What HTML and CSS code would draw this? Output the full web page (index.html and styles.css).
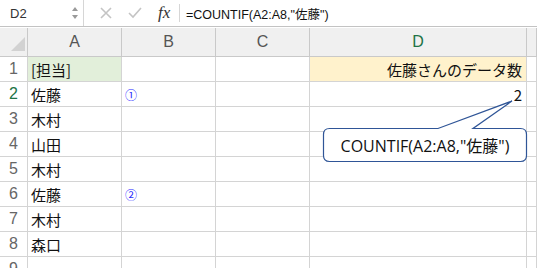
FILE: index.html
```html
<!DOCTYPE html>
<html lang="ja">
<head>
    <meta charset="UTF-8">
    <title>COUNTIF</title>
    <link rel="stylesheet" href="styles.css">
</head>
<body>
    <!-- Formula bar -->
    <div class="formula-bar">
        <div class="name-box">
            <span class="cell-ref">D2</span>
            <svg class="spin" width="8" height="14" viewBox="0 0 8 14">
                <path d="M4 1 L7 5 L1 5 Z" fill="#9a9a9a"/>
                <path d="M4 13 L7 9 L1 9 Z" fill="#9a9a9a"/>
            </svg>
        </div>
        <div class="fb-tools">
            <svg width="12" height="12" viewBox="0 0 12 12">
                <path d="M1 1 L11 11 M11 1 L1 11" stroke="#c4c4c4" stroke-width="1.6"/>
            </svg>
            <svg width="14" height="12" viewBox="0 0 14 12">
                <path d="M1 6 L5 10 L13 1" stroke="#c4c4c4" stroke-width="1.6" fill="none"/>
            </svg>
            <span class="fx">fx</span>
        </div>
        <div class="formula">=COUNTIF(A2:A8,"佐藤")</div>
    </div>

    <!-- Sheet -->
    <div class="sheet">
        <div class="hd corner"><div class="tri"></div></div>
        <div class="hd">A</div>
        <div class="hd">B</div>
        <div class="hd">C</div>
        <div class="hd active">D</div>
        <div class="hd"></div>

        <div class="rn">1</div>
        <div class="c fill-green">[担当]</div>
        <div class="c"></div>
        <div class="c"></div>
        <div class="c fill-yellow right">佐藤さんのデータ数</div>
        <div class="c"></div>

        <div class="rn active">2</div>
        <div class="c">佐藤</div>
        <div class="c note">①</div>
        <div class="c"></div>
        <div class="c right">2</div>
        <div class="c"></div>

        <div class="rn">3</div>
        <div class="c">木村</div>
        <div class="c"></div>
        <div class="c"></div>
        <div class="c"></div>
        <div class="c"></div>

        <div class="rn">4</div>
        <div class="c">山田</div>
        <div class="c"></div>
        <div class="c"></div>
        <div class="c"></div>
        <div class="c"></div>

        <div class="rn">5</div>
        <div class="c">木村</div>
        <div class="c"></div>
        <div class="c"></div>
        <div class="c"></div>
        <div class="c"></div>

        <div class="rn">6</div>
        <div class="c">佐藤</div>
        <div class="c note">②</div>
        <div class="c"></div>
        <div class="c"></div>
        <div class="c"></div>

        <div class="rn">7</div>
        <div class="c">木村</div>
        <div class="c"></div>
        <div class="c"></div>
        <div class="c"></div>
        <div class="c"></div>

        <div class="rn">8</div>
        <div class="c">森口</div>
        <div class="c"></div>
        <div class="c"></div>
        <div class="c"></div>
        <div class="c"></div>

        <div class="rn">9</div>
        <div class="c"></div>
        <div class="c"></div>
        <div class="c"></div>
        <div class="c"></div>
        <div class="c"></div>
    </div>

    <!-- Callout over the sheet -->
    <div class="callout">
        <svg class="callout-shape" width="537" height="268" viewBox="0 0 537 268">
            <path d="M329.5 128.5 H438 L512 101 L473 128.5 H520.5 Q526.5 128.5 526.5 134.5 V155.5 Q526.5 161.5 520.5 161.5 H329.5 Q323.5 161.5 323.5 155.5 V134.5 Q323.5 128.5 329.5 128.5 Z"
                  fill="#fff" stroke="#2f5597" stroke-width="1.2"/>
        </svg>
        <div class="callout-text">COUNTIF(A2:A8,"佐藤")</div>
    </div>
</body>
</html>
```

FILE: styles.css
```css
body {
    margin: 0;
    width: 537px;
    height: 268px;
    overflow: hidden;
    position: relative;
    background: #fff;
    font-family: 'Liberation Sans', 'Noto Sans CJK JP', sans-serif;
    color: #222;
}

/* formula bar */
.formula-bar {
    display: flex;
    align-items: center;
    height: 27px;
    border-bottom: 1px solid #c3c3c3;
    box-sizing: border-box;
}
.name-box {
    display: flex;
    align-items: center;
    justify-content: space-between;
    width: 84px;
    height: 100%;
    padding: 0 4px 0 10px;
    box-sizing: border-box;
    border-right: 1px solid #d6d6d6;
}
.cell-ref {
    font-size: 13px;
    color: #333;
}
.fb-tools {
    display: flex;
    align-items: center;
    gap: 16px;
    padding-left: 16px;
    width: 96px;
    height: 18px;
    box-sizing: border-box;
    border-right: 1px solid #d6d6d6;
}
.fx {
    font-family: 'Liberation Serif', serif;
    font-style: italic;
    font-size: 17px;
    color: #333;
}
.formula {
    padding-left: 6px;
    font-size: 12.5px;
    color: #111;
}

/* sheet grid */
.sheet {
    display: grid;
    grid-template-columns: 28px 94px 94px 94px 217px 1fr;
    grid-template-rows: 29px repeat(9, 25px);
    margin-top: 1px;
}
.hd, .rn, .c {
    box-sizing: border-box;
    border-right: 1px solid #d4d4d4;
    border-bottom: 1px solid #d4d4d4;
    display: flex;
    align-items: center;
}
.hd {
    justify-content: center;
    background: #f0f0f0;
    border-color: #c9c9c9;
    font-size: 16px;
    color: #555;
}
.hd.active {
    color: #217346;
}
.corner {
    position: relative;
}
.tri {
    position: absolute;
    right: 2px;
    bottom: 5px;
    width: 0;
    height: 0;
    border-left: 14px solid transparent;
    border-bottom: 14px solid #d2d2d2;
}
.rn {
    justify-content: center;
    font-size: 16px;
    color: #666;
}
.rn.active {
    color: #217346;
}
.c {
    padding: 0 4px 0 3px;
    font-family: 'Noto Sans CJK JP', sans-serif;
    font-size: 15px;
    color: #111;
    white-space: nowrap;
}
.c.right {
    justify-content: flex-end;
}
.fill-green {
    background: #e2efda;
}
.fill-yellow {
    background: #fff2cc;
}
.note {
    font-size: 12px;
    color: #2b2bff;
}

/* callout */
.callout {
    position: absolute;
    left: 0;
    top: 0;
    width: 537px;
    height: 268px;
    pointer-events: none;
}
.callout-shape {
    position: absolute;
    left: 0;
    top: 0;
}
.callout-text {
    position: absolute;
    left: 324px;
    top: 129px;
    width: 202px;
    height: 32px;
    display: flex;
    align-items: center;
    justify-content: center;
    font-family: 'Open Sans', 'Noto Sans CJK JP', sans-serif;
    font-size: 16px;
    color: #111;
}
```
